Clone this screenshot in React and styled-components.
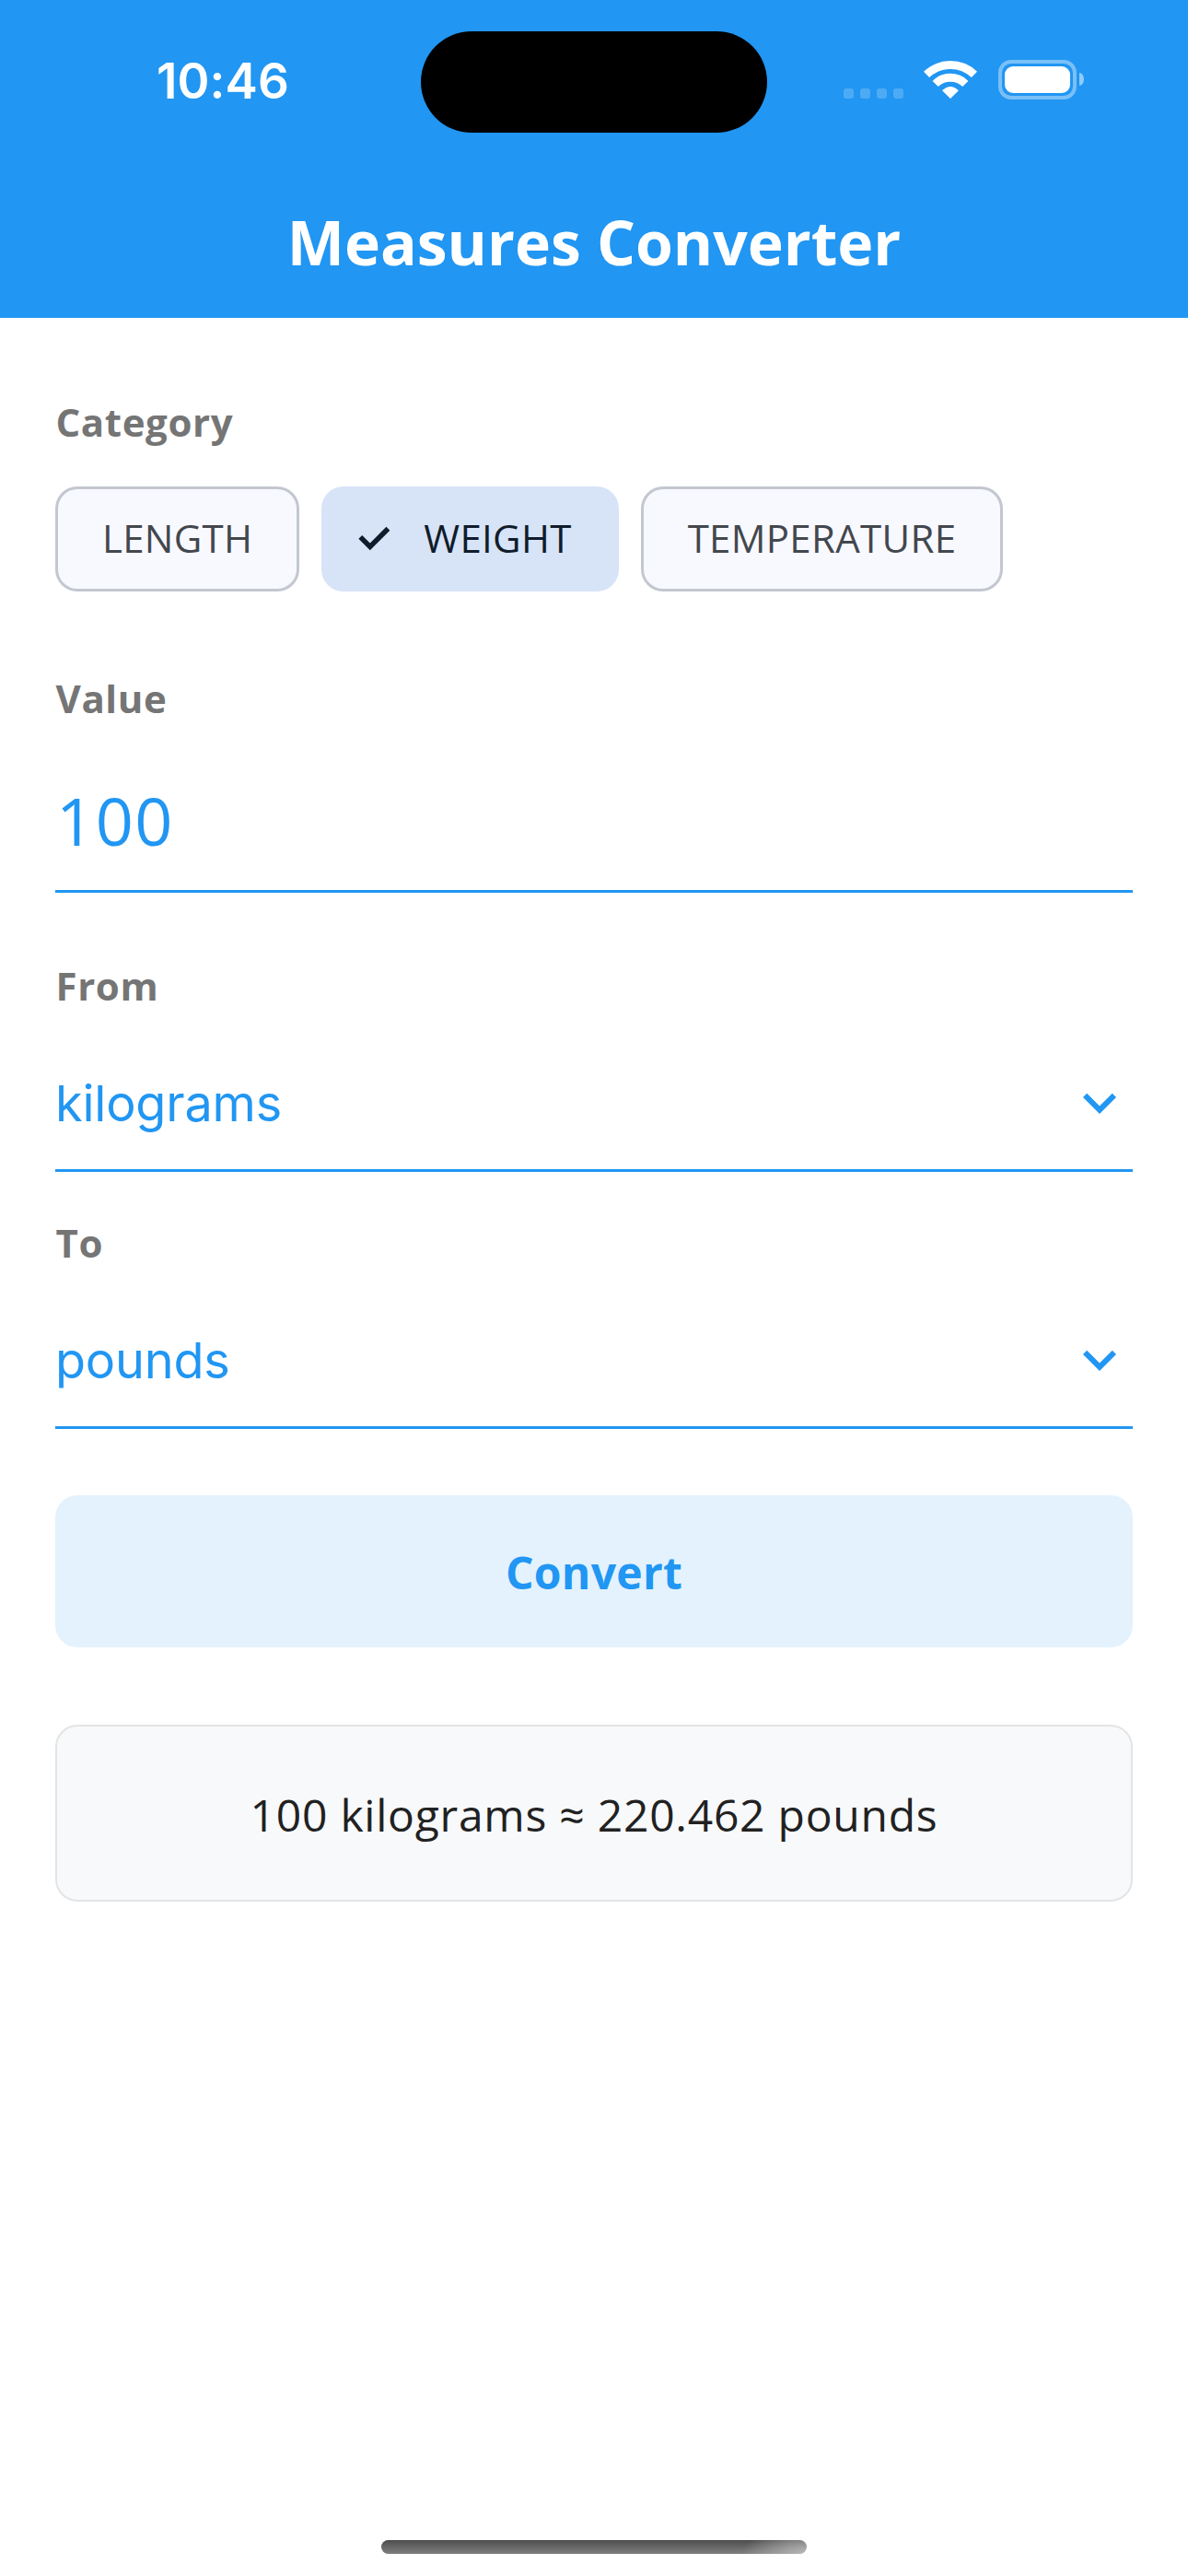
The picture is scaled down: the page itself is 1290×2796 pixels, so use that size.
import React, { useState } from "react";
import styled, { createGlobalStyle } from "styled-components";

const BLUE = "#2196f3";

const GlobalStyle = createGlobalStyle`
  *, *::before, *::after { box-sizing: border-box; }
  body { margin: 0; background: #fff; }
  button { font: inherit; margin: 0; border: 0; background: none; cursor: pointer; }
`;

const Screen = styled.div`
  display: flex;
  flex-direction: column;
  width: 1290px;
  height: 2796px;
  overflow: hidden;
  background: #fff;
  font-family: "Open Sans", "Noto Sans", sans-serif;
`;

const Header = styled.header`
  height: 345px;
  background: ${BLUE};
  color: #fff;
`;

const StatusBar = styled.div`
  display: grid;
  grid-template-columns: 457px 376px 457px;
  height: 177px;
`;

const Clock = styled.span`
  padding: 56px 0 0 170px;
  font-family: Inter, sans-serif;
  font-size: 53px;
  font-weight: 600;
  line-height: 64px;
  letter-spacing: 0.1px;
`;

const Island = styled.div`
  height: 110px;
  margin-top: 34px;
  border-radius: 55px;
  background: #000;
`;

const StatusIcons = styled.div`
  display: flex;
  align-items: flex-start;
  padding: 65px 0 0 83px;
`;

const Signal = styled.div`
  display: flex;
  gap: 7px;
  margin-top: 31px;
`;

const SignalDot = styled.i`
  width: 11px;
  height: 11px;
  border-radius: 3px;
  background: rgba(255, 255, 255, 0.2);
`;

const WifiSvg = styled.svg`
  width: 58px;
  height: 43px;
  margin-left: 22px;
`;

const BatteryShell = styled.div`
  width: 85px;
  height: 43px;
  margin-left: 23px;
  padding: 3px;
  border: 4px solid rgba(255, 255, 255, 0.4);
  border-radius: 14px;
`;

const BatteryLevel = styled.div`
  height: 29px;
  border-radius: 9px;
  background: #fff;
`;

const BatteryCap = styled.i`
  width: 5px;
  height: 14px;
  margin: 14px 0 0 3px;
  border-radius: 0 5px 5px 0 / 0 7px 7px 0;
  background: rgba(255, 255, 255, 0.5);
`;

const Title = styled.h1`
  margin: 0;
  padding-top: 1px;
  font-size: 66px;
  font-weight: 700;
  line-height: 168px;
  text-align: center;
`;

const Content = styled.main`
  flex: 1;
  padding: 83px 60px 0;
`;

const Section = styled.section`
  margin-bottom: ${(p) => p.$space}px;
`;

const Label = styled.h2`
  margin: 0;
  padding-left: 0.5px;
  color: #757575;
  font-size: 42px;
  font-weight: 700;
  line-height: 60px;
  letter-spacing: 0.6px;
`;

const ChipRow = styled.div`
  display: flex;
  gap: 24px;
  margin-top: 40px;
`;

const Chip = styled.button`
  display: flex;
  align-items: center;
  height: 114px;
  padding: 0 51px 2px ${(p) => (p.$selected ? 27 : 51)}px;
  border-radius: 24px;
  box-shadow: ${(p) => (p.$selected ? "none" : "inset 0 0 0 3px #c3c7cf")};
  background: ${(p) => (p.$selected ? "#d7e3f7" : "#f8f9ff")};
  color: ${(p) => (p.$selected ? "#101c2b" : "#43474e")};
  font-size: 42px;
  line-height: 60px;
  letter-spacing: 0.3px;
`;

const CheckSvg = styled.svg`
  width: 42px;
  height: 42px;
  margin: 2px 33px 0 9px;
`;

const ValueBox = styled.div`
  height: 181px;
  padding: 53px 0 0 1px;
  border-bottom: 3px solid ${BLUE};
  color: ${BLUE};
  font-size: 72px;
  line-height: 98px;
  letter-spacing: 1.5px;
`;

const Select = styled.button`
  display: flex;
  align-items: center;
  justify-content: space-between;
  width: 100%;
  height: 172px;
  padding: 25px 0 0;
  border-bottom: 3px solid ${BLUE};
  color: ${BLUE};
`;

const SelectText = styled.span`
  padding-top: 2px;
  font-family: Inter, sans-serif;
  font-size: 54px;
  line-height: 66px;
  letter-spacing: -0.2px;
`;

const ChevronSvg = styled.svg`
  width: 72px;
  height: 72px;
`;

const ConvertButton = styled.button`
  display: block;
  width: 100%;
  height: 165px;
  padding: 2px 0 0;
  border-radius: 24px;
  background: #e3f2fd;
  color: ${BLUE};
  font-size: 48px;
  font-weight: 700;
  letter-spacing: 0.3px;
`;

const Result = styled.output`
  display: flex;
  align-items: center;
  justify-content: center;
  height: 192px;
  margin-top: 84px;
  padding-top: 2px;
  border: 2px solid #e3e4e5;
  border-radius: 24px;
  background: #f8f9fb;
  color: #212121;
  font-size: 48px;
  letter-spacing: 0.75px;
`;

const HomeIndicator = styled.div`
  width: 462px;
  height: 15px;
  margin: 0 auto 24px;
  border-radius: 8px;
  background:
    radial-gradient(70px 30px at 100% 100%, rgba(190, 190, 190, 0.9), transparent),
    linear-gradient(#4d4d4d, #808080);
`;

const Wifi = () => (
  <WifiSvg viewBox="0 0 58 43" fill="none" stroke="#fff">
    <path d="M3 15.9A37.7 37.7 0 0 1 55 15.9" strokeWidth="8.8" />
    <path d="M12.7 26A23.1 23.1 0 0 1 45.3 26" strokeWidth="8.8" />
    <path d="M29 41.5 20.6 33.2Q29 25.6 37.4 33.2Z" fill="#fff" strokeWidth="1" strokeLinejoin="round" />
  </WifiSvg>
);

const Check = () => (
  <CheckSvg viewBox="0 0 42 42" fill="none" stroke="currentColor" strokeWidth="5.5">
    <path d="M6.3 18.9 16.8 29.4 36.4 9.8" />
  </CheckSvg>
);

const Chevron = () => (
  <ChevronSvg viewBox="0 0 24 24" fill="currentColor">
    <path d="M7.41 8.59 12 13.17l4.59-4.58L18 10l-6 6-6-6z" />
  </ChevronSvg>
);

const categories = ["LENGTH", "WEIGHT", "TEMPERATURE"];

export default function App() {
  const [category, setCategory] = useState("WEIGHT");
  return (
    <Screen>
      <GlobalStyle />
      <Header>
        <StatusBar>
          <Clock>10:46</Clock>
          <Island />
          <StatusIcons>
            <Signal>
              <SignalDot />
              <SignalDot />
              <SignalDot />
              <SignalDot />
            </Signal>
            <Wifi />
            <BatteryShell>
              <BatteryLevel />
            </BatteryShell>
            <BatteryCap />
          </StatusIcons>
        </StatusBar>
        <Title>Measures Converter</Title>
      </Header>
      <Content>
        <Section $space={86}>
          <Label>Category</Label>
          <ChipRow>
            {categories.map((name) => (
              <Chip key={name} $selected={name === category} onClick={() => setCategory(name)}>
                {name === category && <Check />}
                {name}
              </Chip>
            ))}
          </ChipRow>
        </Section>
        <Section $space={71}>
          <Label>Value</Label>
          <ValueBox>100</ValueBox>
        </Section>
        <Section $space={47}>
          <Label>From</Label>
          <Select>
            <SelectText>kilograms</SelectText>
            <Chevron />
          </Select>
        </Section>
        <Section $space={72}>
          <Label>To</Label>
          <Select>
            <SelectText>pounds</SelectText>
            <Chevron />
          </Select>
        </Section>
        <ConvertButton>Convert</ConvertButton>
        <Result>100 kilograms ≈ 220.462 pounds</Result>
      </Content>
      <HomeIndicator />
    </Screen>
  );
}
